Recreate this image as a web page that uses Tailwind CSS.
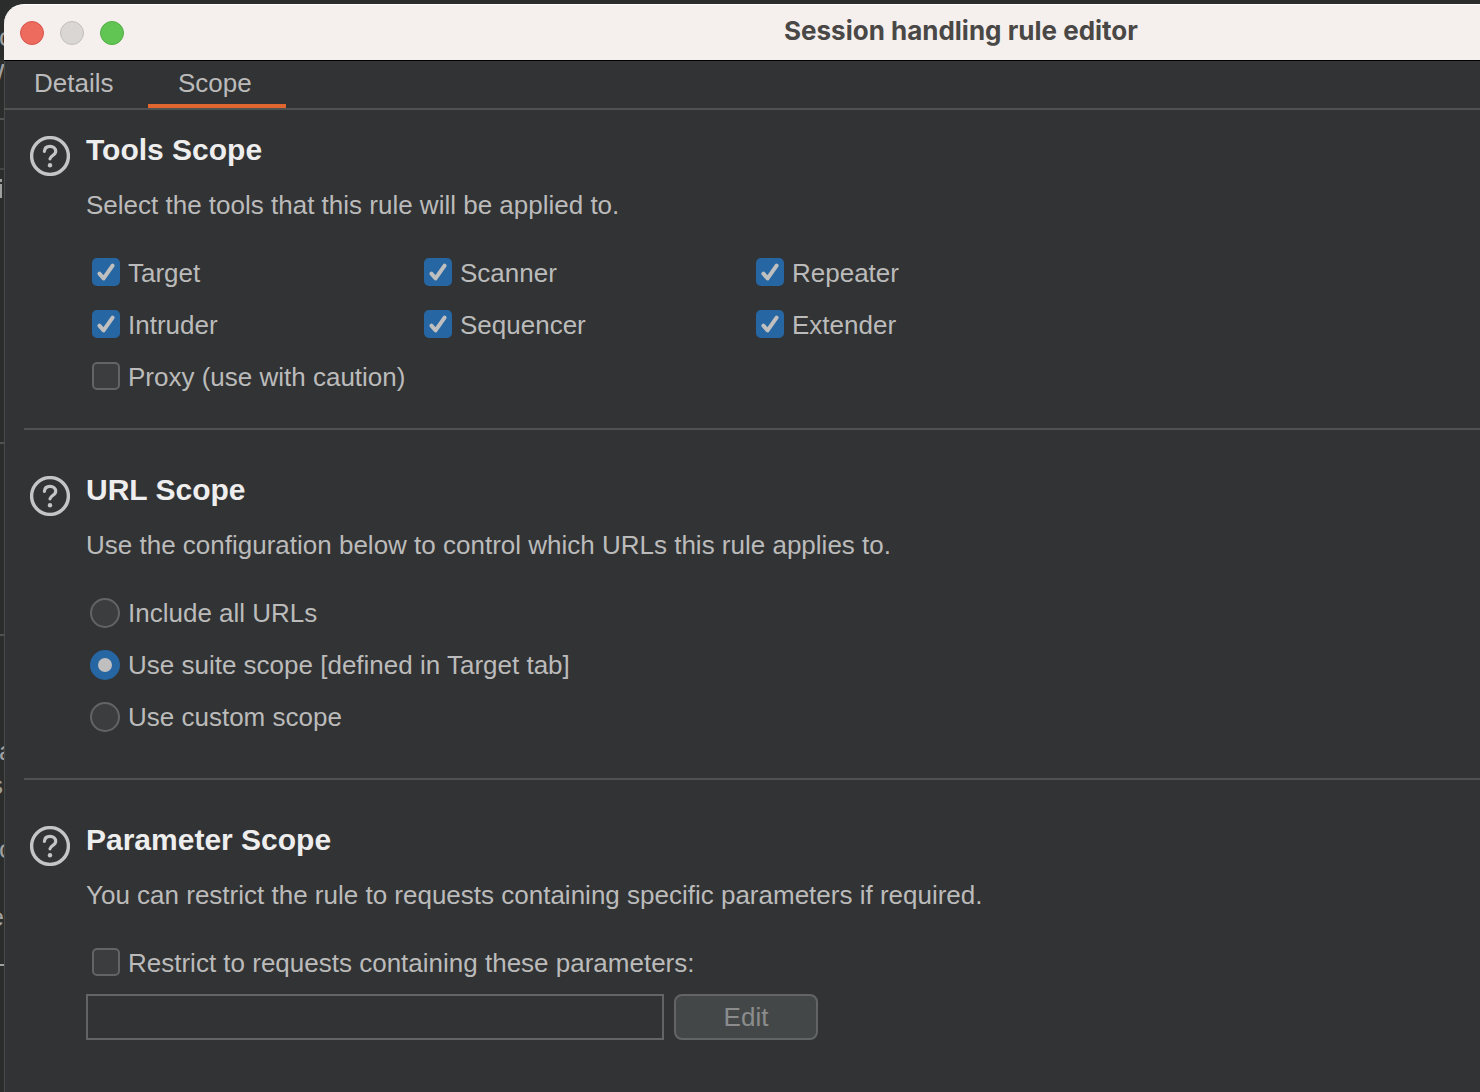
<!DOCTYPE html>
<html lang="en">
<head>
<meta charset="utf-8">
<title>Session handling rule editor</title>
<script src="https://cdn.jsdelivr.net/npm/@tailwindcss/browser@4"></script>
</head>
<body class="relative min-h-screen overflow-x-hidden bg-[#2b2c2c] pt-1 pl-1 font-['Liberation_Sans',Arial,sans-serif] text-[26px] leading-8 text-[#bbbbbb]">

<!-- Window underneath: only its right edge shows past the editor -->
<div aria-hidden="true" class="absolute inset-y-0 left-0 w-1 overflow-hidden text-[#a0a0a0]">
  <span class="absolute top-[21px] -left-px">o</span>
  <span class="absolute top-[57px] -left-5">W</span>
  <i class="absolute top-[118px] h-0.5 w-full bg-[#505151]"></i>
  <i class="absolute top-[168px] h-0.5 w-full bg-[#434444]"></i>
  <i class="absolute top-[179px] h-[3px] w-0.5 bg-[#a0a0a0]"></i>
  <i class="absolute top-[184px] h-[14px] w-0.5 bg-[#a0a0a0]"></i>
  <i class="absolute top-[442px] h-0.5 w-full bg-[#505151]"></i>
  <i class="absolute top-[634px] h-0.5 w-full bg-[#505151]"></i>
  <span class="absolute top-[735px] -left-px">a</span>
  <span class="absolute top-[769px] right-px">s</span>
  <span class="absolute top-[833px] -left-px">o</span>
  <span class="absolute top-[901px] right-0">e</span>
  <i class="absolute top-[964px] h-0.5 w-full bg-[#a0a0a0]"></i>
</div>

<div class="relative flex min-h-[calc(100vh-4px)] flex-col rounded-tl-[20px] border-l border-[#484949] bg-[#323334]">
  <header class="-ml-px flex h-14 items-center rounded-tl-[20px] border-t border-white bg-[#f5f0ed] pl-4">
    <div class="flex gap-4">
      <button aria-label="Close" class="size-6 rounded-full border border-[#d9544a] bg-[#ed6a5e]"></button>
      <button aria-label="Minimize" class="size-6 rounded-full border border-[#c3bfbc] bg-[#dad6d3]"></button>
      <button aria-label="Zoom" class="size-6 rounded-full border border-[#50ae43] bg-[#61c554]"></button>
    </div>
    <h1 class="flex-1 pb-1 pl-[660px] font-['Inter',sans-serif] text-[26px] font-bold whitespace-nowrap text-[#4a4846]">Session handling rule editor</h1>
  </header>

  <nav class="-ml-px flex h-[50px] border-t border-b-2 border-t-black border-b-[#505151]">
    <a href="#details" class="w-36 border-b-4 border-transparent px-[30px] pt-1.5">Details</a>
    <a href="#scope" class="w-[138px] border-b-4 border-[#e0662f] px-[30px] pt-1.5" aria-current="page">Scope</a>
  </nav>

  <main class="-ml-px pl-5">
    <section class="flex gap-4 border-b-2 border-[#505151] pt-[22px] pb-[38px] pl-1.5">
      <svg class="mt-1 size-10 shrink-0" viewBox="0 0 40 40" fill="none" stroke="#c3c5c7" stroke-linecap="round"><circle cx="20" cy="20" r="18.4" stroke-width="3.4"/><path d="M14.4 15.3C14.6 12.3 16.800 10.3 20 10.3S25.700 12.400 25.700 15.300C25.700 19.300 20.500 19.500 20 22.800" stroke-width="3.2"/><circle cx="20" cy="29.200" r="2.200" fill="#c3c5c7" stroke="none"/></svg>
      <div>
        <h2 class="text-[30px] leading-9 font-bold text-[#eeeeee]">Tools Scope</h2>
        <p class="mt-[21px]">Select the tools that this rule will be applied to.</p>
        <div class="mt-[37px] ml-1.5 grid auto-rows-[28px] grid-cols-[332px_332px_auto] gap-y-6">
          <label class="flex items-center gap-2"><span class="grid"><input type="checkbox" checked class="peer col-start-1 row-start-1 size-7 appearance-none rounded-[5px] border-2 border-[#636464] bg-[#3c3d3e] checked:border-[#2666a3] checked:bg-[#2666a3]"><svg class="invisible col-start-1 row-start-1 size-7 pointer-events-none peer-checked:visible" viewBox="0 0 28 28" fill="none" stroke="#bfbfbf" stroke-width="4" stroke-linecap="round" stroke-linejoin="round"><path d="M7.400 15.700L11.600 20.400L20.600 7.700"/></svg></span><span class="pt-0.5">Target</span></label>
          <label class="flex items-center gap-2"><span class="grid"><input type="checkbox" checked class="peer col-start-1 row-start-1 size-7 appearance-none rounded-[5px] border-2 border-[#636464] bg-[#3c3d3e] checked:border-[#2666a3] checked:bg-[#2666a3]"><svg class="invisible col-start-1 row-start-1 size-7 pointer-events-none peer-checked:visible" viewBox="0 0 28 28" fill="none" stroke="#bfbfbf" stroke-width="4" stroke-linecap="round" stroke-linejoin="round"><path d="M7.400 15.700L11.600 20.400L20.600 7.700"/></svg></span><span class="pt-0.5">Scanner</span></label>
          <label class="flex items-center gap-2"><span class="grid"><input type="checkbox" checked class="peer col-start-1 row-start-1 size-7 appearance-none rounded-[5px] border-2 border-[#636464] bg-[#3c3d3e] checked:border-[#2666a3] checked:bg-[#2666a3]"><svg class="invisible col-start-1 row-start-1 size-7 pointer-events-none peer-checked:visible" viewBox="0 0 28 28" fill="none" stroke="#bfbfbf" stroke-width="4" stroke-linecap="round" stroke-linejoin="round"><path d="M7.400 15.700L11.600 20.400L20.600 7.700"/></svg></span><span class="pt-0.5">Repeater</span></label>
          <label class="flex items-center gap-2"><span class="grid"><input type="checkbox" checked class="peer col-start-1 row-start-1 size-7 appearance-none rounded-[5px] border-2 border-[#636464] bg-[#3c3d3e] checked:border-[#2666a3] checked:bg-[#2666a3]"><svg class="invisible col-start-1 row-start-1 size-7 pointer-events-none peer-checked:visible" viewBox="0 0 28 28" fill="none" stroke="#bfbfbf" stroke-width="4" stroke-linecap="round" stroke-linejoin="round"><path d="M7.400 15.700L11.600 20.400L20.600 7.700"/></svg></span><span class="pt-0.5">Intruder</span></label>
          <label class="flex items-center gap-2"><span class="grid"><input type="checkbox" checked class="peer col-start-1 row-start-1 size-7 appearance-none rounded-[5px] border-2 border-[#636464] bg-[#3c3d3e] checked:border-[#2666a3] checked:bg-[#2666a3]"><svg class="invisible col-start-1 row-start-1 size-7 pointer-events-none peer-checked:visible" viewBox="0 0 28 28" fill="none" stroke="#bfbfbf" stroke-width="4" stroke-linecap="round" stroke-linejoin="round"><path d="M7.400 15.700L11.600 20.400L20.600 7.700"/></svg></span><span class="pt-0.5">Sequencer</span></label>
          <label class="flex items-center gap-2"><span class="grid"><input type="checkbox" checked class="peer col-start-1 row-start-1 size-7 appearance-none rounded-[5px] border-2 border-[#636464] bg-[#3c3d3e] checked:border-[#2666a3] checked:bg-[#2666a3]"><svg class="invisible col-start-1 row-start-1 size-7 pointer-events-none peer-checked:visible" viewBox="0 0 28 28" fill="none" stroke="#bfbfbf" stroke-width="4" stroke-linecap="round" stroke-linejoin="round"><path d="M7.400 15.700L11.600 20.400L20.600 7.700"/></svg></span><span class="pt-0.5">Extender</span></label>
          <label class="flex items-center gap-2 whitespace-nowrap"><input type="checkbox" class="size-7 shrink-0 appearance-none rounded-[5px] border-2 border-[#636464] bg-[#3c3d3e] checked:bg-[#2666a3]"><span class="pt-0.5">Proxy (use with caution)</span></label>
        </div>
      </div>
    </section>

    <section class="flex gap-4 border-b-2 border-[#505151] pt-[42px] pb-[46px] pl-1.5">
      <svg class="mt-1 size-10 shrink-0" viewBox="0 0 40 40" fill="none" stroke="#c3c5c7" stroke-linecap="round"><circle cx="20" cy="20" r="18.4" stroke-width="3.4"/><path d="M14.4 15.3C14.6 12.3 16.800 10.3 20 10.3S25.700 12.400 25.700 15.300C25.700 19.300 20.500 19.500 20 22.800" stroke-width="3.2"/><circle cx="20" cy="29.200" r="2.200" fill="#c3c5c7" stroke="none"/></svg>
      <div>
        <h2 class="text-[30px] leading-9 font-bold text-[#eeeeee]">URL Scope</h2>
        <p class="mt-[21px]">Use the configuration below to control which URLs this rule applies to.</p>
        <div class="mt-[37px] ml-1 grid auto-rows-[30px] gap-y-[22px]">
          <label class="flex items-center gap-2"><input type="radio" name="url" class="size-[30px] appearance-none rounded-full border-2 border-[#636464] bg-[#3c3d3e] checked:border-8 checked:border-[#2666a3] checked:bg-[#bfbfbf]">Include all URLs</label>
          <label class="flex items-center gap-2"><input type="radio" name="url" checked class="size-[30px] appearance-none rounded-full border-2 border-[#636464] bg-[#3c3d3e] checked:border-8 checked:border-[#2666a3] checked:bg-[#bfbfbf]">Use suite scope [defined in Target tab]</label>
          <label class="flex items-center gap-2"><input type="radio" name="url" class="size-[30px] appearance-none rounded-full border-2 border-[#636464] bg-[#3c3d3e] checked:border-8 checked:border-[#2666a3] checked:bg-[#bfbfbf]">Use custom scope</label>
        </div>
      </div>
    </section>

    <section class="flex gap-4 pt-[42px] pb-[38px] pl-1.5">
      <svg class="mt-1 size-10 shrink-0" viewBox="0 0 40 40" fill="none" stroke="#c3c5c7" stroke-linecap="round"><circle cx="20" cy="20" r="18.4" stroke-width="3.4"/><path d="M14.4 15.3C14.6 12.3 16.800 10.3 20 10.3S25.700 12.400 25.700 15.300C25.700 19.300 20.500 19.500 20 22.800" stroke-width="3.2"/><circle cx="20" cy="29.200" r="2.200" fill="#c3c5c7" stroke="none"/></svg>
      <div>
        <h2 class="text-[30px] leading-9 font-bold text-[#eeeeee]">Parameter Scope</h2>
        <p class="mt-[21px]">You can restrict the rule to requests containing specific parameters if required.</p>
        <label class="mt-[37px] ml-1.5 flex h-7 items-center gap-2"><input type="checkbox" class="size-7 appearance-none rounded-[5px] border-2 border-[#636464] bg-[#3c3d3e] checked:bg-[#2666a3]"><span class="pt-0.5">Restrict to requests containing these parameters:</span></label>
        <div class="mt-[18px] flex gap-2.5">
          <input type="text" disabled aria-label="Parameters" class="h-[46px] w-[578px] border-2 border-[#636464] px-2">
          <button disabled class="h-[46px] w-36 rounded-lg border-2 border-[#636565] bg-[#434748] text-[#8c8c8c]">Edit</button>
        </div>
      </div>
    </section>
  </main>
</div>
</body>
</html>
